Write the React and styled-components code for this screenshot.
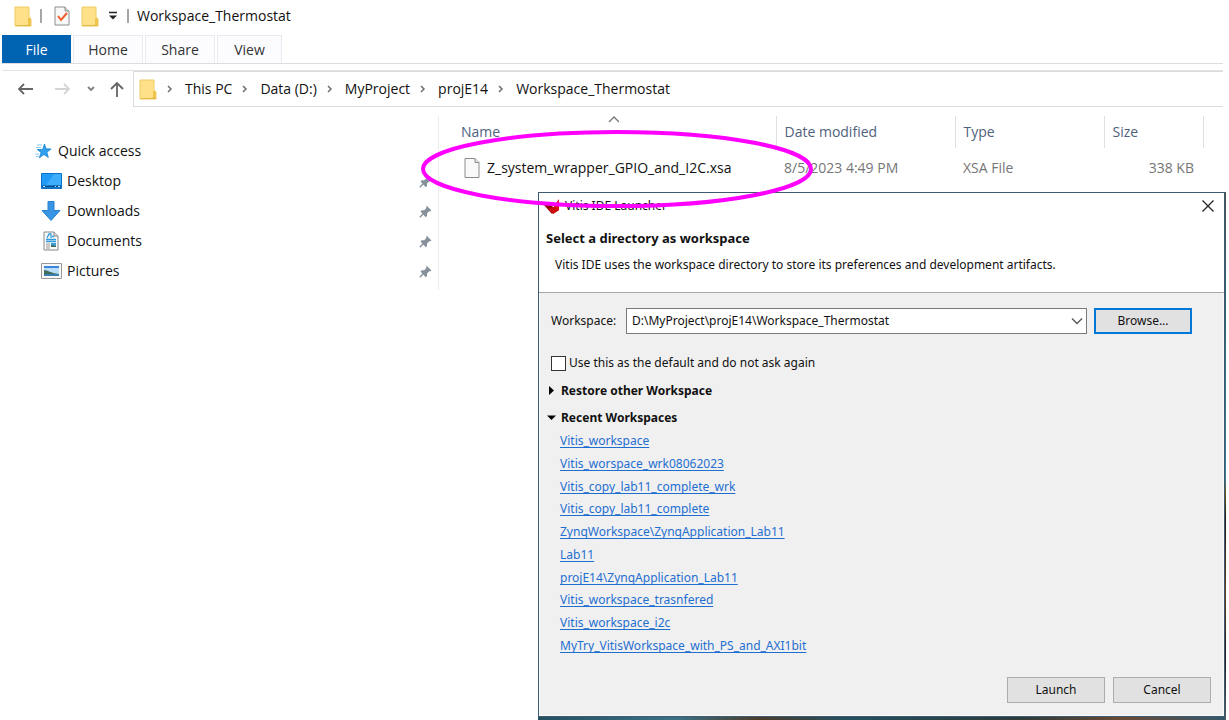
import React from 'react';
import styled, { createGlobalStyle } from 'styled-components';

const GlobalStyle = createGlobalStyle`
  * {
    box-sizing: border-box;
  }
  body {
    margin: 0;
    background-color: #fff;
  }
  button, input, select {
    font: inherit;
    color: inherit;
  }
`
const Desktop = styled.div`
  position: relative;
  min-height: 100vh;
  overflow: hidden;
  font-family: "Open Sans", "Noto Sans", sans-serif;
  font-size: 14px;
  line-height: 20px;
  color: #111;
`
const Explorer = styled.div`
  padding: 0 6px 0 2px;
`
const TitleBar = styled.header`
  display: flex;
  align-items: center;
  height: 35px;
  padding: 0 0 3px 12px;
`
const Title = styled.h1`
  margin: 0 0 0 7px;
  font-size: 14px;
  font-weight: 400;
`
const Separator = styled.span`
  width: 2px;
  height: 14px;
  margin: 0 ${props => props.$right}px 0 ${props => props.$left}px;
  background-color: #a6a6a6;
`
const TitleButton = styled.button`
  display: flex;
  padding: 0;
  margin-right: ${props => props.$right || 0}px;
  border: none;
  background: none;
`
const Tabs = styled.nav`
  display: flex;
  gap: 2px;
  height: 29px;
  border-bottom: 1px solid #dcdde0;
`
const Tab = styled.button`
  width: ${props => props.$width}px;
  padding: 0;
  border: 1px solid ${props => props.$active ? '#0063b1' : '#e9eaf0'};
  border-bottom: none;
  background-color: ${props => props.$active ? '#0063b1' : '#fcfcff'};
  && {
    color: ${props => props.$active ? '#fff' : '#333'};
  }
`
const AddressRow = styled.div`
  display: flex;
  align-items: stretch;
  height: 36px;
`
const NavButtons = styled.div`
  display: flex;
  align-items: center;
  width: 131px;
  padding-left: 15px;
`
const NavButton = styled.button`
  display: flex;
  width: ${props => props.$width}px;
  padding: 0;
  border: none;
  background: none;
`
const AddressBar = styled.nav`
  display: flex;
  flex: 1;
  align-items: center;
  padding-left: 5px;
  border: 1px solid #dcdcdc;
  border-right: none;
`
const Crumb = styled.a`
  color: inherit;
  text-decoration: none;
`
const CrumbArrow = styled.span`
  display: flex;
  justify-content: center;
  width: 28px;
`
const TopRule = styled.div`
  height: 1px;
  margin-top: 6px;
  background-color: #e2e2e2;
`
const Content = styled.div`
  display: flex;
  align-items: flex-start;
  padding-top: 9px;
`
const Sidebar = styled.ul`
  width: 437px;
  height: 174px;
  margin: 0;
  padding: 20px 6px 0 33px;
  border-right: 1px solid #ececec;
  list-style: none;
`
const SideItem = styled.li`
  display: flex;
  align-items: center;
  height: 30px;
  padding-left: ${props => props.$nested ? 5 : 0}px;
`
const SideIcon = styled.span`
  display: flex;
  justify-content: center;
  width: ${props => props.$nested ? 22 : 18}px;
  margin-right: 5px;
`
const SideLink = styled.a`
  flex: 1;
  color: inherit;
  text-decoration: none;
`
const FileTable = styled.table`
  flex: 1;
  table-layout: fixed;
  width: 0;
  border-collapse: collapse;
`
const HeadCell = styled.th`
  position: relative;
  width: ${props => props.$width ? props.$width + 'px' : 'auto'};
  height: 32px;
  padding: 0 0 0 ${props => props.$first ? 22 : 8}px;
  border-right: ${props => props.$width ? '1px solid #e0e0e0' : 'none'};
  color: #50627d;
  font-weight: 400;
  text-align: left;
`
const SortMark = styled.svg`
  position: absolute;
  top: 0;
  left: 50%;
`
const Cell = styled.td`
  height: 40px;
  padding: 0 ${props => props.$right ? 9 : 0}px 0 ${props => props.$first ? 25 : 8}px;
  color: ${props => props.$first ? '#111' : '#767676'};
  text-align: ${props => props.$right ? 'right' : 'left'};
`
const FileName = styled.span`
  display: flex;
  align-items: center;
  gap: 7px;
`

const Backdrop = styled.div`
  position: absolute;
  top: 192px;
  right: 3px;
  left: 538px;
  padding: 0 1px 3px 0;
  background:
    linear-gradient(180deg, #4d5547, #33627a 20%, #3c7f9c 54%, #6d5a1e 57%, #1f1c18 62%, #6b3f25 76%, #1c1c1c 88%, #56605a) right / 1px 100% no-repeat,
    linear-gradient(90deg, #24505f, #3a7187 20%, #4b3c2b 32%, #24505f 45%, #2c3b3a 70%, #6b4a35 85%, #34596b);
`
const Dialog = styled.section`
  border: 1px solid #3f5a70;
  background-color: #f0f0f0;
  font-family: "Noto Sans", "Open Sans", sans-serif;
  font-size: 12px;
  line-height: 18px;
  color: #111;
`
const DialogHead = styled.div`
  height: 100px;
  border-bottom: 1px solid #a8a8a8;
  background-color: #fff;
`
const DialogTitle = styled.div`
  display: flex;
  align-items: center;
  gap: 4px;
  height: 26px;
  padding: 0 10px 0 4px;
`
const CloseButton = styled.button`
  display: flex;
  margin-left: auto;
  padding: 0;
  border: none;
  background: none;
`
const Heading = styled.h2`
  margin: 10px 0 9px 7px;
  font-size: 13px;
  line-height: 18px;
`
const Hint = styled.p`
  margin: 0 0 0 16px;
`
const DialogBody = styled.div`
  padding: 15px 12px 12px 11px;
  border: 1px solid #fafafa;
  border-top: none;
`
const PathRow = styled.div`
  display: flex;
  align-items: center;
  padding-right: 19px;
`
const PathLabel = styled.label`
  width: 75px;
`
const PathBox = styled.div`
  position: relative;
  display: flex;
  flex: 1;
`
const PathSelect = styled.select`
  width: 100%;
  height: 26px;
  padding: 0 28px 0 5px;
  border: 1px solid #7a7a7a;
  border-radius: 0;
  background-color: #fff;
  appearance: none;
`
const SelectArrow = styled.svg`
  position: absolute;
  top: 9px;
  right: 4px;
  pointer-events: none;
`
const PushButton = styled.button`
  width: 98px;
  height: 26px;
  padding: 0;
  border: ${props => props.$focused ? '2px solid #0078d7' : '1px solid #adadad'};
  background-color: #e1e1e1;
`
const BrowseButton = styled(PushButton)`
  margin-left: 7px;
`
const CheckRow = styled.label`
  display: flex;
  align-items: center;
  gap: 3px;
  height: 20px;
  margin-top: 19px;
`
const CheckBox = styled.input`
  width: 15px;
  height: 15px;
  margin: 0;
  border: 1px solid #333;
  background-color: #fff;
  appearance: none;
  &:checked {
    background-color: #0078d7;
  }
`
const Expander = styled.button`
  display: flex;
  align-items: center;
  height: 27px;
  margin-left: -4px;
  padding: 0;
  border: none;
  background: none;
  && {
    font-weight: 700;
  }
`
const ExpanderMark = styled.span`
  display: flex;
  width: 14px;
`
const Expanders = styled.div`
  margin-top: 4px;
`
const Recent = styled.ul`
  display: grid;
  grid-auto-rows: 1fr;
  align-items: center;
  height: 227px;
  margin: -1px 0 0;
  padding: 0 0 0 9px;
  list-style: none;
`
const RecentLink = styled.a`
  color: #1f6fd0;
  text-decoration: underline;
  text-decoration-skip-ink: none;
  text-decoration-thickness: 1px;
  text-underline-offset: 2px;
`
const Actions = styled.div`
  display: flex;
  justify-content: flex-end;
  gap: 8px;
  margin-top: 20px;
`
const Highlight = styled.svg`
  position: absolute;
  top: 129px;
  left: 419px;
  pointer-events: none;
`

const FolderIcon = () => (
  <svg width="18" height="21" viewBox="0 0 18 21">
    <path d="M1 1h14v10l2 2v7H1z" fill="#ffe18a" stroke="#eecb62" />
    <path d="M14 12h3v8h-5l2-2z" fill="#efc44f" />
    <path d="M2 19.500h15" stroke="#e5b944" />
  </svg>
)
const CheckedPageIcon = () => (
  <svg width="16" height="20" viewBox="0 0 16 20">
    <path d="M1 1h10l4 4v14H1z" fill="#f8f8f8" stroke="#8c8c8c" />
    <path d="M11 1v4h4" fill="#ddd" stroke="#8c8c8c" />
    <path d="M4 10l3 4 6-7" fill="none" stroke="#f0602a" strokeWidth="2" />
  </svg>
)
const MenuIcon = () => (
  <svg width="10" height="10" viewBox="0 0 10 10">
    <path d="M1 1.500h8" stroke="#222" strokeWidth="1.500" />
    <path d="M1 4.500h8l-4 4z" fill="#222" />
  </svg>
)
const ArrowIcon = ({ color, up }) => (
  <svg width="16" height="16" viewBox="0 0 16 16" fill="none" stroke={color} strokeWidth="1.800">
    {up ? <path d="M8 16V2M2 8l6-6 6 6" /> : <path d="M16 8H2M7 3L2 8l5 5" />}
  </svg>
)
const ForwardIcon = () => (
  <svg width="16" height="16" viewBox="0 0 16 16" fill="none" stroke="#d5d5d5" strokeWidth="1.800">
    <path d="M0 8h14M9 3l5 5-5 5" />
  </svg>
)
const SmallDown = () => (
  <svg width="10" height="8" viewBox="0 0 10 8" fill="none" stroke="#808080" strokeWidth="1.800">
    <path d="M2 2l3 3 3-3" />
  </svg>
)
const SmallRight = () => (
  <svg width="8" height="8" viewBox="0 0 8 8" fill="none" stroke="#707070" strokeWidth="1.500">
    <path d="M1 1l3 3-3 3" />
  </svg>
)
const StarIcon = () => (
  <svg width="18" height="18" viewBox="0 0 18 18">
    <path d="M9.500 2l1.600 4.800 5 .2-4.200 3.200 1.400 5.200-4.400-2.800-4.500 3.200 1.700-5.300-3.900-3h5.400z" fill="#2f9ff0" stroke="#1c86d1" strokeWidth=".8" />
    <path d="M2 3h5M1 5.500h5M0 12h4M1 14.500h3" stroke="#8ccaf5" />
  </svg>
)
const DesktopIcon = () => (
  <svg width="21" height="16" viewBox="0 0 21 16">
    <path d="M.500 .500h20v15H.500z" fill="#1f9bf5" stroke="#0a73c9" />
    <path d="M13 1h7v11H5z" fill="#3eadfb" />
    <path d="M1 13.500h19" stroke="#0b4f91" strokeWidth="2" />
    <path d="M2 13.500h2M14 13.500h1M17 13.500h2" stroke="#bfe2ff" />
  </svg>
)
const DownloadIcon = () => (
  <svg width="20" height="20" viewBox="0 0 20 20">
    <path d="M7 .500h6v9h6l-9 10-9-10h6z" fill="#3a94e4" stroke="#2580d0" />
  </svg>
)
const DocumentIcon = () => (
  <svg width="16" height="20" viewBox="0 0 16 20">
    <path d="M1 1h10l4 4v14H1z" fill="#fafafa" stroke="#888" />
    <path d="M11 1v4h4" fill="#ddd" stroke="#888" />
    <path d="M4 7l2-4h2v4M9 5.500h2M3 8.500h10M3 10.500h10" fill="none" stroke="#2f9ce0" strokeWidth="1.300" />
    <path d="M3 13h4M3 15h4M3 17h4" stroke="#999" />
    <path d="M8 12h5v4H8z" fill="#3e9bd0" />
    <path d="M8 14l5 1v1H8z" fill="#3c6e50" />
  </svg>
)
const PictureIcon = () => (
  <svg width="21" height="16" viewBox="0 0 21 16">
    <path d="M.500 .500h20v15H.500z" fill="#f7f7f7" stroke="#999" />
    <path d="M3 3h15v10H3z" fill="#b9defa" />
    <path d="M3 3h15v2H3z" fill="#3d84dd" />
    <path d="M3 7c4 0 6 3 15 4v1H3z" fill="#3f6b58" />
    <path d="M3 11h15v2H3z" fill="#3a7fb0" />
  </svg>
)
const PinIcon = () => (
  <svg width="13" height="13" viewBox="0 0 13 13">
    <path d="M7.500 0.500l5 5-1.500.8-1 .2-2 2 0 2.500-1.200 1.200L1.500 6.500l1.200-1.300h2.500l2-2z" fill="#87919b" />
    <path d="M4.500 8.500L.800 12.200" stroke="#87919b" strokeWidth="1.400" />
  </svg>
)
const BlankPageIcon = () => (
  <svg width="16" height="20" viewBox="0 0 16 20">
    <path d="M1 .500h10l4 4v15H1z" fill="#f9f9f9" stroke="#8c8c8c" />
    <path d="M11 .500v4h4" fill="#e3e3e3" stroke="#8c8c8c" />
  </svg>
)
const VitisIcon = () => (
  <svg width="18" height="18" viewBox="0 0 18 18">
    <path d="M0 7l8 1 3 3-2 6z" fill="#8f0a0a" />
    <path d="M10 17l1-8 5-7v11z" fill="#e01010" />
    <path d="M5 12l5 5 6-4-5-3z" fill="#cc0d0d" />
  </svg>
)

const tabs = [
  { name: 'File', width: 69, active: true },
  { name: 'Home', width: 70 },
  { name: 'Share', width: 70 },
  { name: 'View', width: 65 },
];
const crumbs = ['This PC', 'Data (D:)', 'MyProject', 'projE14', 'Workspace_Thermostat'];
const places = [
  { name: 'Desktop', Icon: DesktopIcon },
  { name: 'Downloads', Icon: DownloadIcon },
  { name: 'Documents', Icon: DocumentIcon },
  { name: 'Pictures', Icon: PictureIcon },
];
const recent = [
  'Vitis_workspace',
  'Vitis_worspace_wrk08062023',
  'Vitis_copy_lab11_complete_wrk',
  'Vitis_copy_lab11_complete',
  'ZynqWorkspace\\ZynqApplication_Lab11',
  'Lab11',
  'projE14\\ZynqApplication_Lab11',
  'Vitis_workspace_trasnfered',
  'Vitis_workspace_i2c',
  'MyTry_VitisWorkspace_with_PS_and_AXI1bit',
];

const ExplorerWindow = () => {
  return (
    <Explorer>
      <TitleBar>
        <FolderIcon />
        <Separator $left={8} $right={12} />
        <TitleButton $right={11} aria-label="Properties"><CheckedPageIcon /></TitleButton>
        <TitleButton $right={9} aria-label="New folder"><FolderIcon /></TitleButton>
        <TitleButton aria-label="Customize toolbar"><MenuIcon /></TitleButton>
        <Separator $left={9} $right={1} />
        <Title>Workspace_Thermostat</Title>
      </TitleBar>
      <Tabs>
        {tabs.map(tab => (
          <Tab key={tab.name} $width={tab.width} $active={tab.active}>{tab.name}</Tab>
        ))}
      </Tabs>
      <TopRule />
      <AddressRow>
        <NavButtons>
          <NavButton $width={38} aria-label="Back"><ArrowIcon color="#666" /></NavButton>
          <NavButton $width={31} aria-label="Forward"><ForwardIcon /></NavButton>
          <NavButton $width={23} aria-label="Recent locations"><SmallDown /></NavButton>
          <NavButton $width={16} aria-label="Up"><ArrowIcon up color="#666" /></NavButton>
        </NavButtons>
        <AddressBar>
          <FolderIcon />
          {crumbs.map(crumb => (
            <React.Fragment key={crumb}>
              <CrumbArrow><SmallRight /></CrumbArrow>
              <Crumb href="#">{crumb}</Crumb>
            </React.Fragment>
          ))}
        </AddressBar>
      </AddressRow>
      <Content>
        <Sidebar>
          <SideItem>
            <SideIcon><StarIcon /></SideIcon>
            <SideLink href="#">Quick access</SideLink>
          </SideItem>
          {places.map(({ name, Icon }) => (
            <SideItem key={name} $nested>
              <SideIcon $nested><Icon /></SideIcon>
              <SideLink href="#">{name}</SideLink>
              <PinIcon />
            </SideItem>
          ))}
        </Sidebar>
        <FileTable>
          <thead>
            <tr>
              <HeadCell $first $width={337}>
                Name
                <SortMark width="12" height="8" viewBox="0 0 12 8">
                  <path d="M2 6l5-5 5 5" fill="none" stroke="#777" strokeWidth="1.300" />
                </SortMark>
              </HeadCell>
              <HeadCell $width={179}>Date modified</HeadCell>
              <HeadCell $width={149}>Type</HeadCell>
              <HeadCell $width={99}>Size</HeadCell>
              <HeadCell as="td" />
            </tr>
          </thead>
          <tbody>
            <tr>
              <Cell $first><FileName><BlankPageIcon />Z_system_wrapper_GPIO_and_I2C.xsa</FileName></Cell>
              <Cell>8/5/2023 4:49 PM</Cell>
              <Cell>XSA File</Cell>
              <Cell $right>338 KB</Cell>
              <Cell />
            </tr>
          </tbody>
        </FileTable>
      </Content>
    </Explorer>
  )
}

const LauncherDialog = () => {
  return (
    <Backdrop>
      <Dialog role="dialog" aria-labelledby="launcher-heading">
        <DialogHead>
          <DialogTitle>
            <VitisIcon />
            <span>Vitis IDE Launcher</span>
            <CloseButton aria-label="Close">
              <svg width="12" height="12" viewBox="0 0 12 12">
                <path d="M.500 .500l11 11M11.500 .500l-11 11" stroke="#222" strokeWidth="1.300" />
              </svg>
            </CloseButton>
          </DialogTitle>
          <Heading id="launcher-heading">Select a directory as workspace</Heading>
          <Hint>Vitis IDE uses the workspace directory to store its preferences and development artifacts.</Hint>
        </DialogHead>
        <DialogBody>
          <PathRow>
            <PathLabel htmlFor="workspace-path">Workspace:</PathLabel>
            <PathBox>
              <PathSelect id="workspace-path">
                <option>D:\MyProject\projE14\Workspace_Thermostat</option>
              </PathSelect>
              <SelectArrow width="12" height="8" viewBox="0 0 12 8">
                <path d="M1 1.500l5 5 5-5" fill="none" stroke="#555" strokeWidth="1.300" />
              </SelectArrow>
            </PathBox>
            <BrowseButton $focused>Browse...</BrowseButton>
          </PathRow>
          <CheckRow>
            <CheckBox type="checkbox" />
            Use this as the default and do not ask again
          </CheckRow>
          <Expanders>
            <Expander aria-expanded="false">
              <ExpanderMark>
                <svg width="9" height="9" viewBox="0 0 9 9"><path d="M2 0l5 4.500L2 9z" fill="#000" /></svg>
              </ExpanderMark>
              Restore other Workspace
            </Expander>
            <Expander aria-expanded="true">
              <ExpanderMark>
                <svg width="9" height="9" viewBox="0 0 9 9"><path d="M0 2.500h9L4.500 7z" fill="#000" /></svg>
              </ExpanderMark>
              Recent Workspaces
            </Expander>
          </Expanders>
          <Recent>
            {recent.map(name => (
              <li key={name}><RecentLink href="#">{name}</RecentLink></li>
            ))}
          </Recent>
          <Actions>
            <PushButton>Launch</PushButton>
            <PushButton>Cancel</PushButton>
          </Actions>
        </DialogBody>
      </Dialog>
    </Backdrop>
  )
}

const App = () => {
  return (
    <Desktop>
      <GlobalStyle />
      <ExplorerWindow />
      <LauncherDialog />
      <Highlight width="396" height="80" viewBox="0 0 396 80">
        <ellipse cx="198" cy="40" rx="194" ry="37" fill="none" stroke="#ff00ff" strokeWidth="4" />
      </Highlight>
    </Desktop>
  )
}
export default App;
